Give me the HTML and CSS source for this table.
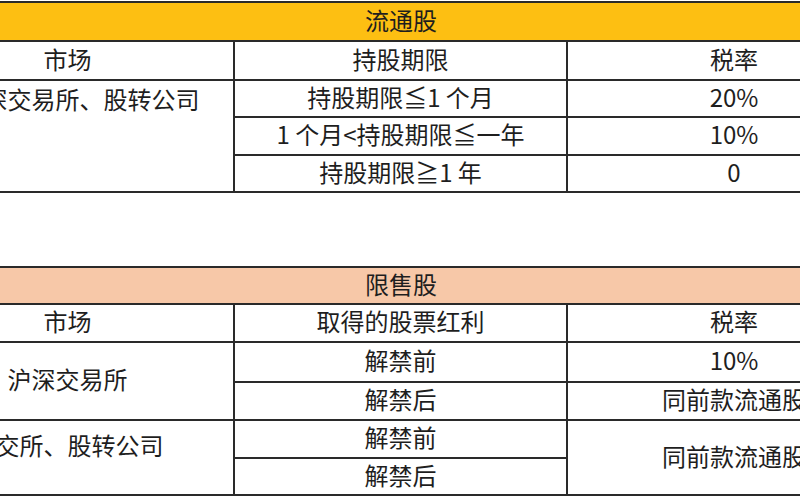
FILE: index.html
```html
<!DOCTYPE html>
<html lang="zh-CN">
<head>
<meta charset="utf-8">
<title>股息红利税率</title>
<link rel="stylesheet" href="styles.css">
</head>
<body>
<div class="page">
  <table class="tax tax-top">
    <colgroup><col class="c1"><col class="c2"><col class="c3"></colgroup>
    <tr class="r-title"><th colspan="3" class="title gold">流通股</th></tr>
    <tr class="r-h1"><td>市场</td><td>持股期限</td><td>税率</td></tr>
    <tr class="r-a"><td rowspan="3" class="market top-align">沪、深交易所、股转公司</td><td>持股期限≦1 个月</td><td>20%</td></tr>
    <tr class="r-b"><td>1 个月&lt;持股期限≦一年</td><td>10%</td></tr>
    <tr class="r-c"><td>持股期限≧1 年</td><td>0</td></tr>
  </table>

  <table class="tax tax-bottom">
    <colgroup><col class="c1"><col class="c2"><col class="c3"></colgroup>
    <tr class="r-title2"><th colspan="3" class="title salmon">限售股</th></tr>
    <tr class="r-h2"><td>市场</td><td>取得的股票红利</td><td>税率</td></tr>
    <tr class="r-d"><td rowspan="2">沪深交易所</td><td>解禁前</td><td>10%</td></tr>
    <tr class="r-e"><td>解禁后</td><td>同前款流通股</td></tr>
    <tr class="r-f"><td rowspan="2" class="market raise">深交所、股转公司</td><td>解禁前</td><td rowspan="2">同前款流通股</td></tr>
    <tr class="r-g"><td>解禁后</td></tr>
  </table>
</div>
</body>
</html>
```

FILE: styles.css
```css
html, body {
  margin: 0;
  padding: 0;
  background: #ffffff;
}

body {
  width: 800px;
  height: 500px;
  overflow: hidden;
  font-family: "Noto Sans CJK SC", "Noto Sans", sans-serif;
  color: #1e1e1e;
}

.page {
  padding-top: 1px;
  margin-left: -100px;
  width: 1000px;
}

.tax {
  border-collapse: collapse;
  table-layout: fixed;
  width: 1000px;
  font-size: 24px;
}

.c1 { width: 333px; }
.c2 { width: 333px; }
.c3 { width: 334px; }

.tax th,
.tax td {
  border: 2px solid #2a2a2a;
  padding: 0 0 4px 0;
  text-align: center;
  vertical-align: middle;
  font-weight: normal;
  line-height: 1;
  white-space: nowrap;
  overflow: hidden;
}

.title.gold { background: #fdbf12; }
.title.salmon { background: #f7c8a8; }

.tax td.market.top-align {
  vertical-align: top;
  padding: 6px 0 0 0;
}

.tax td.market.raise {
  vertical-align: top;
  padding: 12px 0 0 0;
}

.tax-bottom { margin-top: 73px; }

.r-title th { height: 33px; }
.r-h1 td { height: 33px; }
.r-a td { height: 31px; }
.r-b td { height: 32px; }
.r-c td { height: 31px; }

.r-title2 th { height: 31px; }
.r-h2 td { height: 32px; }
.r-d td { height: 34px; }
.r-e td { height: 32px; }
.r-f td { height: 32px; }
.r-g td { height: 31px; }
```
